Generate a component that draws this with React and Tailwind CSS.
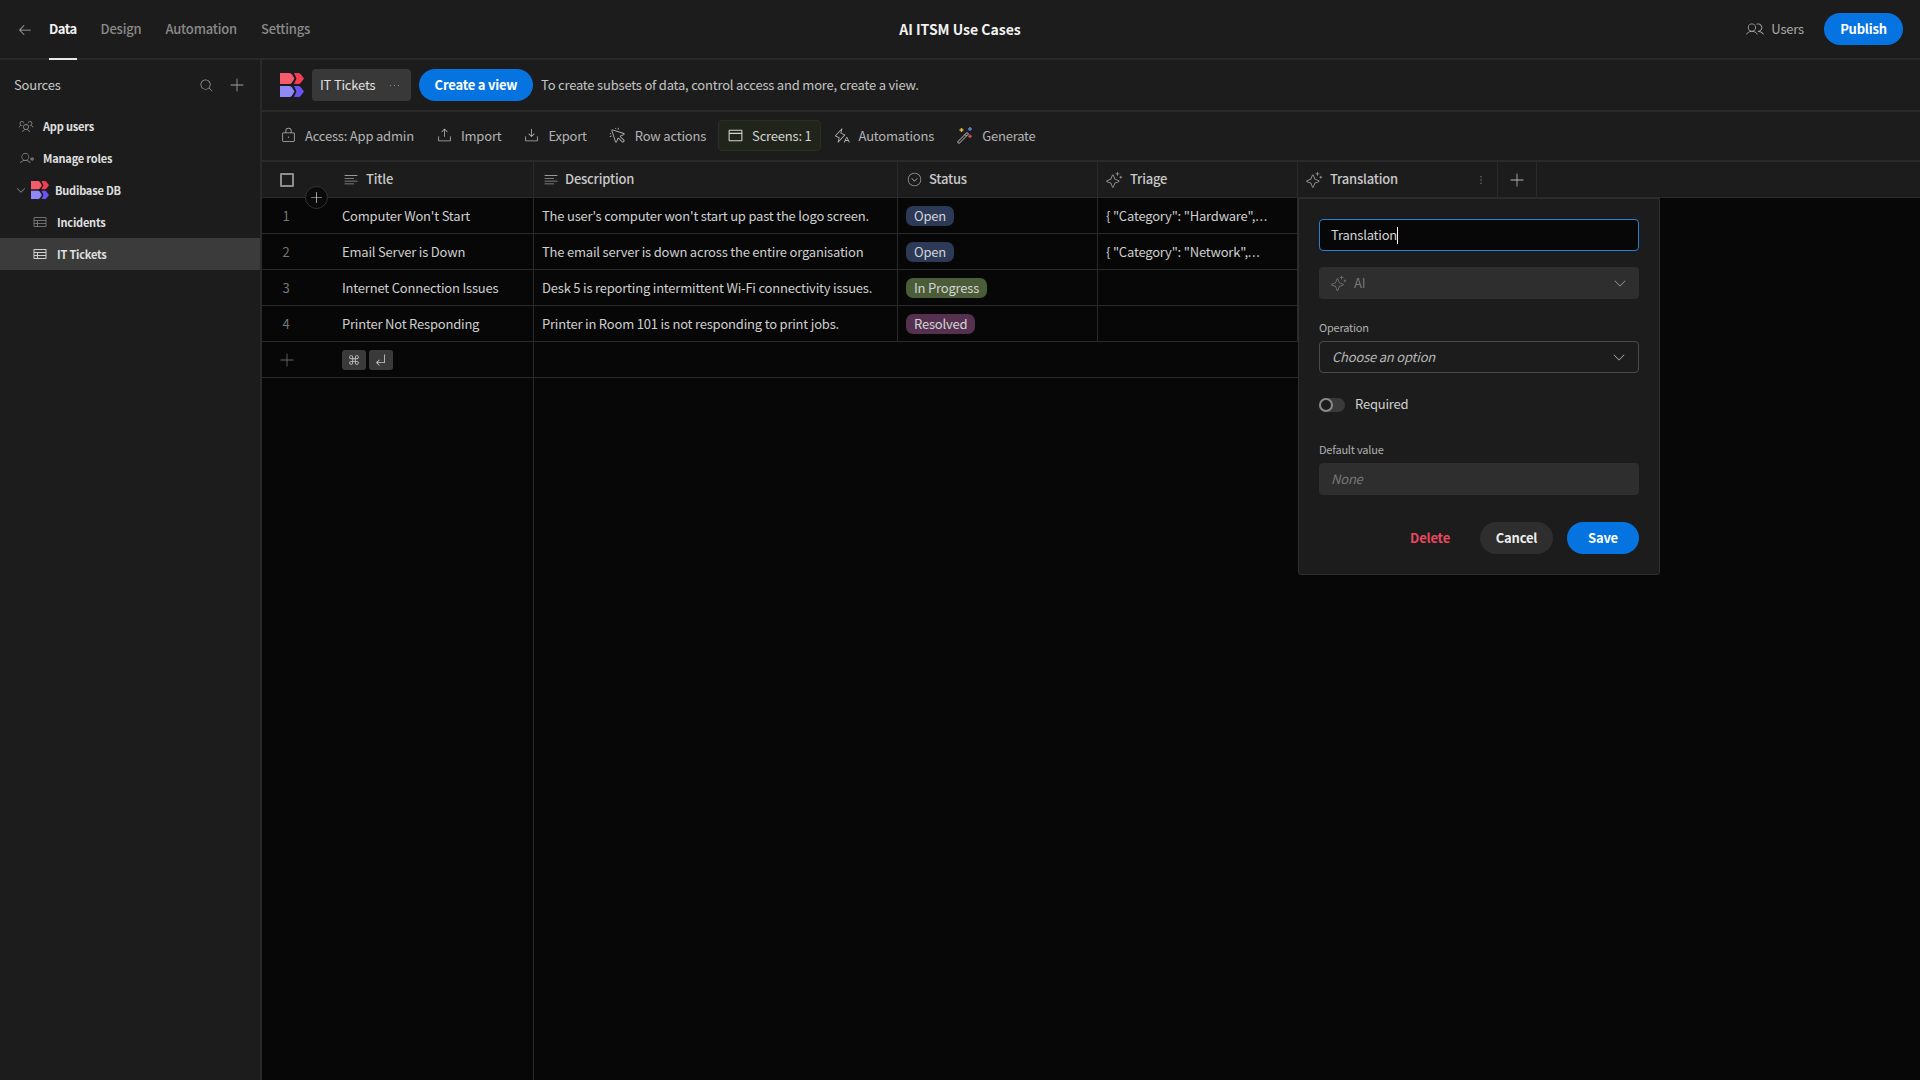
import {
    PiArrowLeftLight, PiMagnifyingGlassLight, PiPlusLight, PiCaretDownLight, PiDotsThreeLight, PiDotsThreeVerticalBold,
    PiLockLight, PiUploadSimpleLight, PiDownloadSimpleLight, PiCursorClickLight, PiBrowser, PiLightningALight,
    PiTextAlignLeftLight, PiUsersLight, PiUsersThreeLight, PiUserGearLight, PiTableLight, PiTable,
    PiSparkleLight, PiCaretCircleDownLight, PiCommand, PiArrowElbowDownLeft,
} from "react-icons/pi";

function Logo({ size = 24 }) {
    return (
        <svg width={size} height={size} viewBox="0 0 24 24">
            <path d="M0 0H9.500Q11 0 12 1.500L14.500 5.500L12 9.500Q11 11 9.500 11H0Z" fill="#f45c6c" />
            <path d="M14 0H18.500Q20 0 21 1.500L24 5.500L21 9.500Q20 11 18.500 11H14L16.500 5.500Z" fill="#f33d55" />
            <path d="M0 13H9.500Q11 13 12 14.500L14.500 18.500L12 22.500Q11 24 9.500 24H0Z" fill="#8f88f8" />
            <path d="M14 13H18.500Q20 13 21 14.500L24 18.500L21 22.500Q20 24 18.500 24H14L16.500 18.500Z" fill="#6a55f0" />
        </svg>
    );
}

function Wand() {
    return (
        <svg width="18" height="18" viewBox="0 0 18 18" fill="none">
            <path d="M1.500 15L11 5.500l1.500 1.500L3 16.500z" stroke="#c4c4c4" strokeWidth="1" strokeLinejoin="round" />
            <path d="M9 7.500l1.500 1.500" stroke="#c4c4c4" strokeWidth="1" />
            <path d="M5.500 1v4M3.500 3h4" stroke="#d8b24a" strokeWidth="1.500" />
            <path d="M14 0v4M12 2h4" stroke="#5b7fd8" strokeWidth="1.500" />
            <path d="M14 7.500v3.500M12.300 9.200h3.500" stroke="#d8485a" strokeWidth="1.500" />
        </svg>
    );
}

function ToolbarItem({ icon, label, active }) {
    return (
        <div className={`flex h-[31px] items-center gap-[8px] rounded-[4px] border ${active ? "border-[#2a3020] bg-[#20241a] px-[8px] text-[#d4d4d4]" : "border-transparent px-[9px] text-[#b4b4b4]"}`}>
            {icon}
            <span>{label}</span>
        </div>
    );
}

function Badge({ label, color }) {
    return <span className={`block h-[20px] rounded-[7px] px-[8px] leading-[20px] text-[#d4d4d4] ${color}`}>{label}</span>;
}

const rows = [
    { title: "Computer Won't Start", description: "The user's computer won't start up past the logo screen.", status: "Open", color: "bg-[#2c3a58]", triage: '{ "Category": "Hardware",' },
    { title: "Email Server is Down", description: "The email server is down across the entire organisation", status: "Open", color: "bg-[#2c3a58]", triage: '{ "Category": "Network",' },
    { title: "Internet Connection Issues", description: "Desk 5 is reporting intermittent Wi-Fi connectivity issues.", status: "In Progress", color: "bg-[#4a5c38]", triage: "" },
    { title: "Printer Not Responding", description: "Printer in Room 101 is not responding to print jobs.", status: "Resolved", color: "bg-[#55314f]", triage: "" },
];

export default function App() {
    return (
        <div className="flex h-[1080px] w-[1920px] flex-col overflow-hidden bg-[#070707] font-['Noto_Sans_CJK_SC',sans-serif] text-[13px] leading-[18px] tracking-[-0.2px]">
            <header className="flex h-[60px] shrink-0 items-center justify-between border-b-2 border-[#2a2a2a] bg-[#1c1c1c] pl-[17px] pr-[17px]">
                <div className="flex h-full w-[400px] items-center">
                    <PiArrowLeftLight size={16} className="mt-[2px] text-[#b5b5b5]" />
                    <div className="ml-[16px] flex h-full items-center gap-[24px] font-medium text-[#8a8a8a]">
                        <div className="relative flex h-full items-center font-semibold tracking-[-0.5px] text-[#f2f2f2]">
                            Data
                            <div className="absolute bottom-[-2px] left-0 h-[2px] w-full bg-[#e8e8e8]" />
                        </div>
                        <div>Design</div>
                        <div>Automation</div>
                        <div>Settings</div>
                    </div>
                </div>
                <div className="pb-[1px] text-[14px] font-semibold tracking-normal text-[#f2f2f2]">AI ITSM Use Cases</div>
                <div className="flex w-[400px] items-center justify-end gap-[20px]">
                    <div className="flex items-center gap-[7px] text-[#a8a8a8]">
                        <PiUsersLight size={18} />
                        Users
                    </div>
                    <button className="h-[32px] w-[79px] rounded-full bg-[#0573e0] font-bold text-white">Publish</button>
                </div>
            </header>
            <div className="relative flex min-h-0 flex-1">
                <aside className="w-[262px] shrink-0 border-r-2 border-[#2a2a2a] bg-[#1c1c1c]">
                    <div className="flex h-[50px] items-center justify-between pl-[14px] pr-[14px]">
                        <span className="text-[#c8c8c8]">Sources</span>
                        <div className="flex items-center gap-[14px] text-[#a0a0a0]">
                            <PiMagnifyingGlassLight size={15} />
                            <PiPlusLight size={18} />
                        </div>
                    </div>
                    <div className="text-[11px] font-semibold text-[#e0e0e0]">
                        <div className="flex h-[32px] items-center pl-[18px]">
                            <PiUsersThreeLight size={16} className="text-[#8a8a8a]" />
                            <span className="ml-[9px]">App users</span>
                        </div>
                        <div className="flex h-[32px] items-center pl-[19px]">
                            <PiUserGearLight size={15} className="text-[#8a8a8a]" />
                            <span className="ml-[9px]">Manage roles</span>
                        </div>
                        <div className="flex h-[32px] items-center pl-[15px]">
                            <PiCaretDownLight size={12} className="text-[#999]" />
                            <span className="ml-[4px]"><Logo size={18} /></span>
                            <span className="ml-[6px]">Budibase DB</span>
                        </div>
                        <div className="flex h-[32px] items-center pl-[32px]">
                            <PiTableLight size={16} className="text-[#8a8a8a]" />
                            <span className="ml-[9px]">Incidents</span>
                        </div>
                        <div className="flex h-[32px] items-center bg-[#3b3b3b] pl-[32px]">
                            <PiTable size={16} className="text-[#d0d0d0]" />
                            <span className="ml-[9px]">IT Tickets</span>
                        </div>
                    </div>
                </aside>
                <main className="flex min-w-0 flex-1 flex-col">
                    <div className="flex h-[52px] shrink-0 items-center border-b-2 border-[#2a2a2a] bg-[#1c1c1c] pl-[18px]">
                        <Logo size={24} />
                        <div className="ml-[8px] flex h-[32px] w-[99px] items-center justify-between rounded-[4px] bg-[#383838] pl-[8px] pr-[9px] text-[#e0e0e0]">
                            IT Tickets
                            <PiDotsThreeLight size={15} className="text-[#999]" />
                        </div>
                        <button className="ml-[8px] h-[32px] w-[114px] rounded-full bg-[#0573e0] font-semibold text-white">Create a view</button>
                        <span className="ml-[8px] text-[#c4c4c4]">To create subsets of data, control access and more, create a view.</span>
                    </div>
                    <div className="flex h-[50px] shrink-0 items-center gap-[2px] border-b-2 border-[#2a2a2a] bg-[#1c1c1c] pb-[1px] pl-[8px]">
                        <ToolbarItem label="Access: App admin" icon={<PiLockLight size={17} />} />
                        <ToolbarItem label="Import" icon={<PiUploadSimpleLight size={17} />} />
                        <ToolbarItem label="Export" icon={<PiDownloadSimpleLight size={17} />} />
                        <ToolbarItem label="Row actions" icon={<PiCursorClickLight size={18} />} />
                        <ToolbarItem label="Screens: 1" active icon={<PiBrowser size={17} />} />
                        <ToolbarItem label="Automations" icon={<PiLightningALight size={18} />} />
                        <ToolbarItem label="Generate" icon={<Wand />} />
                    </div>
                    <div className="relative min-h-0 flex-1">
                        <div className="flex h-[36px] border-b border-[#2a2a2a] bg-[#1c1c1c] font-medium text-[#c9c9c9]">
                            <div className="flex w-[272px] shrink-0 items-center border-r border-[#2a2a2a]">
                                <div className="ml-[18px] h-[14px] w-[14px] rounded-[1px] border-2 border-[#8e8e8e]" />
                                <PiTextAlignLeftLight size={18} className="ml-[48px] text-[#999]" />
                                <span className="mb-[1px] ml-[6px]">Title</span>
                            </div>
                            <div className="flex w-[364px] shrink-0 items-center border-r border-[#2a2a2a] pl-[8px]">
                                <PiTextAlignLeftLight size={18} className="text-[#999]" />
                                <span className="mb-[1px] ml-[5px]">Description</span>
                            </div>
                            <div className="flex w-[200px] shrink-0 items-center border-r border-[#2a2a2a] pl-[8px]">
                                <PiCaretCircleDownLight size={17} className="text-[#999]" />
                                <span className="mb-[1px] ml-[6px]">Status</span>
                            </div>
                            <div className="flex w-[200px] shrink-0 items-center border-r border-[#2a2a2a] pl-[7px]">
                                <PiSparkleLight size={18} className="text-[#999]" />
                                <span className="mb-[1px] ml-[7px]">Triage</span>
                            </div>
                            <div className="flex w-[200px] shrink-0 items-center border-r border-[#2a2a2a] pl-[7px]">
                                <PiSparkleLight size={18} className="text-[#999]" />
                                <span className="mb-[1px] ml-[7px]">Translation</span>
                                <PiDotsThreeVerticalBold size={12} className="ml-auto mr-[10px] text-[#777]" />
                            </div>
                            <div className="flex w-[39px] shrink-0 items-center justify-center border-r border-[#2a2a2a]">
                                <PiPlusLight size={18} className="text-[#b5b5b5]" />
                            </div>
                        </div>
                        {rows.map((row, i) => (
                            <div key={row.title} className="flex h-[36px] text-[#cfcfcf]">
                                <div className="flex w-[272px] shrink-0 items-center border-b border-r border-[#2a2a2a]">
                                    <span className="w-[48px] text-center text-[#777]">{i + 1}</span>
                                    <span className="ml-[32px]">{row.title}</span>
                                </div>
                                <div className="flex w-[364px] shrink-0 items-center whitespace-nowrap border-b border-r border-[#2a2a2a] pl-[8px]">{row.description}</div>
                                <div className="flex w-[200px] shrink-0 items-center border-b border-r border-[#2a2a2a] pl-[8px]"><Badge label={row.status} color={row.color} /></div>
                                <div className="flex w-[200px] shrink-0 items-center whitespace-pre border-b border-r border-[#2a2a2a] pl-[8px]">
                                    {row.triage}
                                    {row.triage && <span className="tracking-[0.6px]">...</span>}
                                </div>
                            </div>
                        ))}
                        <div className="flex h-[36px] w-[1036px] border-b border-[#2a2a2a]">
                            <div className="flex w-[272px] shrink-0 items-center border-r border-[#2a2a2a]">
                                <PiPlusLight size={18} className="ml-[16px] text-[#666]" />
                                <div className="ml-[46px] flex gap-[3px]">
                                    <span className="flex h-[20px] w-[24px] items-center justify-center rounded-[3px] bg-[#3a3a3a]"><PiCommand size={14} className="text-[#c4c4c4]" /></span>
                                    <span className="flex h-[20px] w-[24px] items-center justify-center rounded-[3px] bg-[#3a3a3a]"><PiArrowElbowDownLeft size={14} className="text-[#c4c4c4]" /></span>
                                </div>
                            </div>
                        </div>
                        <div className="absolute bottom-0 left-0 top-[36px] w-[272px] border-r border-[#2a2a2a]" />
                        <div className="absolute left-[43px] top-[24px] flex h-[23px] w-[23px] items-center justify-center rounded-full border border-[#333] bg-[#0a0a0a]">
                            <PiPlusLight size={15} className="text-[#ddd]" />
                        </div>
                        <div className="absolute left-[1036px] top-[36px] h-[377px] w-[362px] rounded-b-[3px] border border-[#2e2e2e] bg-[#1c1c1c] px-[20px] pt-[20px]">
                            <div className="flex h-[32px] items-center rounded-[4px] border border-[#2f7fd0] bg-[#070707] pl-[11px] text-[#d4d4d4]">
                                Translation
                                <span className="h-[17px] w-px bg-white" />
                            </div>
                            <div className="mt-[16px] flex h-[32px] items-center rounded-[4px] bg-[#2e2e2e] pl-[11px] pr-[11px] text-[#777]">
                                <PiSparkleLight size={17} />
                                <span className="ml-[7px]">AI</span>
                                <PiCaretDownLight size={16} className="ml-auto text-[#999]" />
                            </div>
                            <div className="mt-[20px] text-[11px] leading-[16px] text-[#b0b0b0]">Operation</div>
                            <div className="mt-[6px] flex h-[32px] items-center rounded-[4px] border border-[#4a4a4a] pl-[12px] pr-[11px] italic text-[#b8b8b8]">
                                Choose an option
                                <PiCaretDownLight size={16} className="ml-auto text-[#b0b0b0]" />
                            </div>
                            <div className="mt-[24px] flex h-[16px] items-center">
                                <div className="flex h-[14px] w-[26px] items-center rounded-full bg-[#3a3a3a]">
                                    <div className="h-[14px] w-[14px] rounded-full border-2 border-[#8a8a8a] bg-[#1c1c1c]" />
                                </div>
                                <span className="mb-[2px] ml-[10px] text-[#d0d0d0]">Required</span>
                            </div>
                            <div className="mt-[28px] text-[11px] leading-[16px] text-[#b0b0b0]">Default value</div>
                            <div className="mt-[6px] flex h-[32px] items-center rounded-[4px] bg-[#2e2e2e] pl-[12px] italic text-[#777]">None</div>
                            <div className="mt-[27px] flex items-center justify-end">
                                <span className="mr-[30px] font-semibold text-[#e8495f]">Delete</span>
                                <button className="h-[32px] w-[73px] rounded-full bg-[#2e2e2e] font-semibold text-[#ededed]">Cancel</button>
                                <button className="ml-[14px] h-[32px] w-[72px] rounded-full bg-[#0573e0] font-semibold text-white">Save</button>
                            </div>
                        </div>
                    </div>
                </main>
            </div>
        </div>
    );
}
